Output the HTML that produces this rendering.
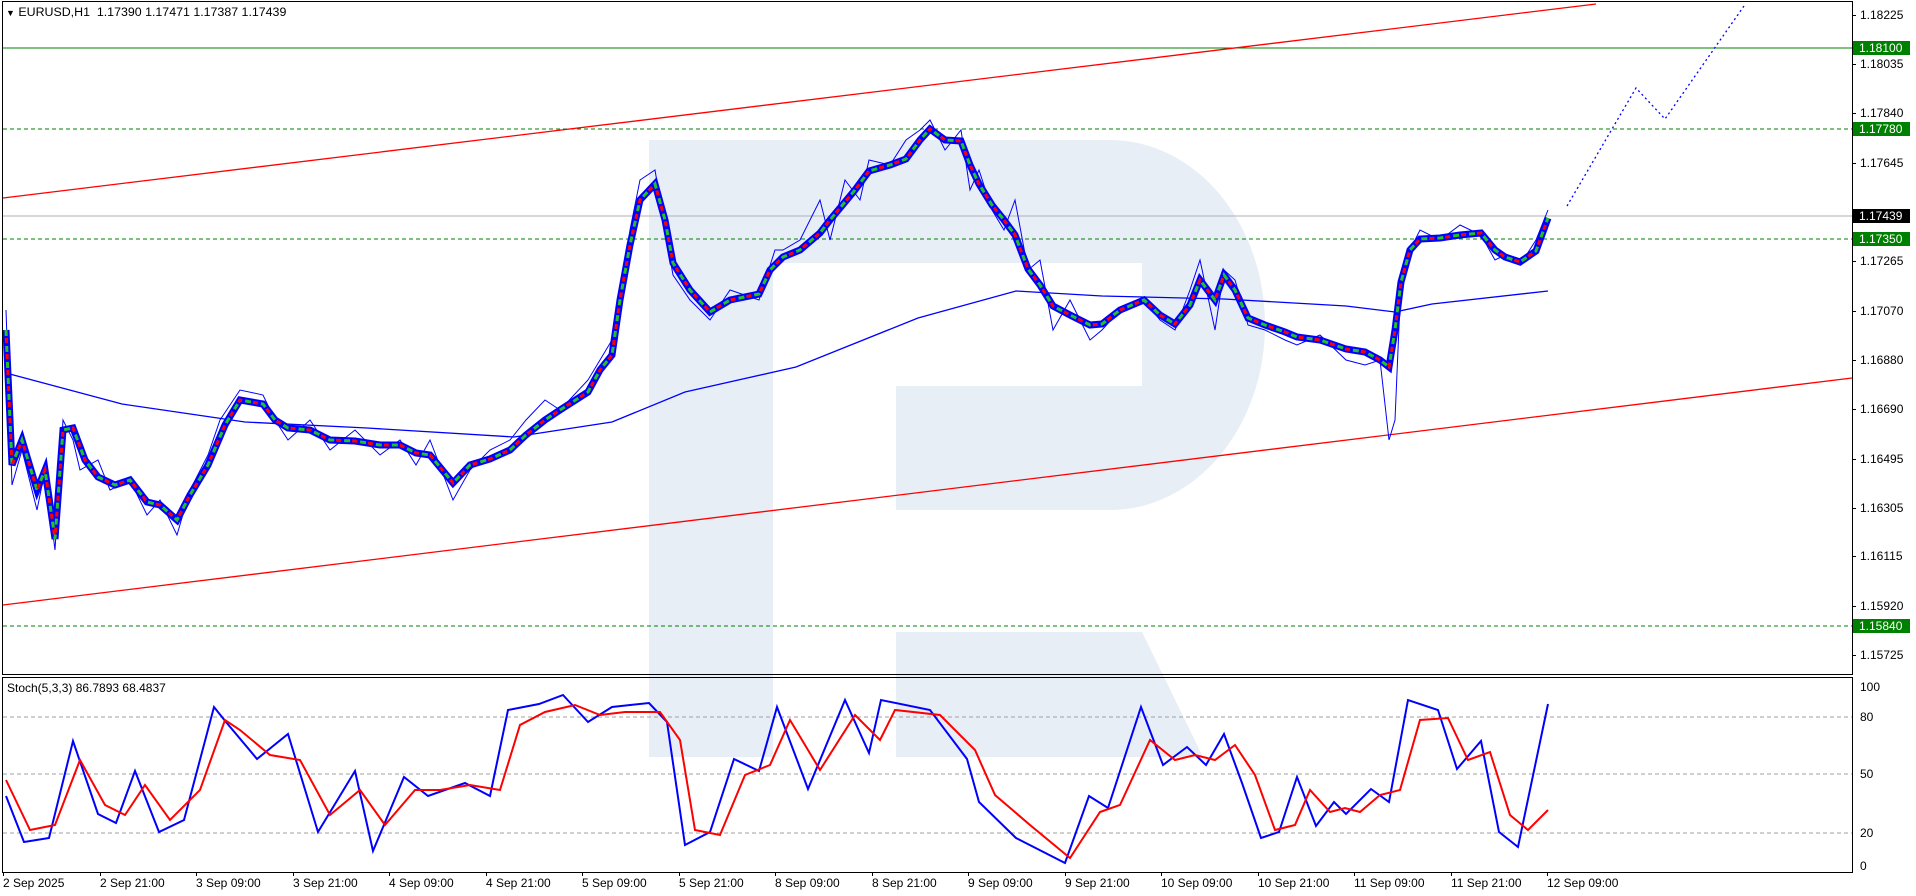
<!DOCTYPE html>
<html><head><meta charset="utf-8"><style>
html,body{margin:0;padding:0;background:#fff;width:1916px;height:896px;overflow:hidden;font-family:"Liberation Sans",sans-serif;}
.l{position:absolute;font-size:12px;color:#000;white-space:nowrap;line-height:14px}
.tag{position:absolute;left:1853px;width:57px;height:14px;font-size:12px;line-height:14px;color:#fff;padding-left:6px;box-sizing:border-box}
.tk{position:absolute;width:4px;height:1px;background:#000;left:1852px}
.vt{position:absolute;width:1px;height:4px;background:#000;top:872px}
</style></head><body>
<svg width="1916" height="896" style="position:absolute;left:0;top:0">
<g fill="#e8eef6">
<path d="M649 140 H1110 A155 185 0 0 1 1265 325 A155 185 0 0 1 1110 510 H896 V386 H1142 V263 H773 V757 H649 Z"/>
<path d="M896 632 H1142 L1203 757 H896 Z"/>
</g>
<g stroke-width="1" fill="none">
<line x1="3" y1="48" x2="1852" y2="48" stroke="#008000"/>
<line x1="3" y1="129" x2="1852" y2="129" stroke="#008000" stroke-dasharray="4,3"/>
<line x1="3" y1="239" x2="1852" y2="239" stroke="#008000" stroke-dasharray="4,3"/>
<line x1="3" y1="626" x2="1852" y2="626" stroke="#008000" stroke-dasharray="4,3"/>
<line x1="3" y1="216" x2="1852" y2="216" stroke="#b0b0b0"/>
<line x1="3" y1="198" x2="1596" y2="4" stroke="#ff0000" stroke-width="1.3"/>
<line x1="3" y1="605" x2="1852" y2="378" stroke="#ff0000" stroke-width="1.3"/>
<line x1="3" y1="717" x2="1852" y2="717" stroke="#a0a0a0" stroke-dasharray="4,3"/>
<line x1="3" y1="774" x2="1852" y2="774" stroke="#a0a0a0" stroke-dasharray="4,3"/>
<line x1="3" y1="833" x2="1852" y2="833" stroke="#a0a0a0" stroke-dasharray="4,3"/>
</g>
<polyline fill="none" stroke="#0000ff" stroke-width="1.3" points="6,373 122,404 245,422 367,428 514,437 612,422 685,392 796,367 918,318 1016,291 1102,296 1224,299 1346,306 1395,312 1432,304 1548,291"/>
<polyline fill="none" stroke="#0000ff" stroke-width="1" points="6,310 12,485 22,450 37,510 45,470 55,550 63,420 73,440 80,470 98,460 110,490 130,480 147,515 160,500 177,535 190,490 208,455 220,420 240,390 263,395 275,420 288,440 310,420 330,450 355,430 380,455 400,440 416,465 430,440 453,500 470,470 490,450 510,440 526,420 545,400 560,410 588,380 600,360 612,340 620,300 630,230 640,180 655,170 665,230 673,275 690,300 710,320 730,290 759,300 775,250 783,250 800,240 820,200 830,240 845,180 860,200 869,160 890,165 906,140 920,130 930,120 945,150 961,130 970,190 979,170 992,210 1004,230 1015,200 1028,270 1040,260 1053,330 1070,300 1090,340 1102,330 1120,310 1144,300 1160,320 1175,330 1190,290 1200,260 1215,330 1224,270 1235,280 1248,325 1265,330 1285,340 1297,345 1320,335 1346,360 1365,365 1380,360 1389,440 1395,420 1401,280 1410,250 1420,230 1440,240 1460,225 1481,235 1495,260 1505,255 1520,265 1536,240 1548,210"/>
<polyline fill="none" stroke="#0000ff" stroke-width="7" points="6,330 12,465 22,440 37,490 45,470 55,539 63,430 73,428 85,460 98,477 115,485 130,480 147,502 160,505 177,520 190,495 208,465 225,425 240,400 263,404 275,420 288,428 310,430 330,440 355,441 380,445 400,445 416,453 430,455 453,483 470,465 490,459 510,450 526,435 545,420 560,410 588,392 600,370 612,355 620,300 630,245 640,200 655,184 665,220 673,263 690,290 710,312 730,300 759,294 770,270 783,257 800,250 820,233 830,220 845,202 855,190 869,171 890,165 906,159 920,140 930,129 945,140 961,141 970,165 979,184 992,205 1004,220 1015,235 1028,269 1040,285 1053,306 1070,315 1090,325 1102,324 1120,310 1144,300 1160,315 1175,324 1190,305 1200,280 1215,300 1224,275 1235,290 1248,318 1265,325 1285,332 1297,337 1320,340 1346,349 1365,352 1380,360 1389,367 1395,330 1401,282 1410,250 1420,239 1440,238 1460,235 1481,233 1495,250 1505,257 1520,262 1536,251 1548,218"/>
<polyline fill="none" stroke="#22c322" stroke-width="3" stroke-dasharray="6,10" points="6,330 12,465 22,440 37,490 45,470 55,539 63,430 73,428 85,460 98,477 115,485 130,480 147,502 160,505 177,520 190,495 208,465 225,425 240,400 263,404 275,420 288,428 310,430 330,440 355,441 380,445 400,445 416,453 430,455 453,483 470,465 490,459 510,450 526,435 545,420 560,410 588,392 600,370 612,355 620,300 630,245 640,200 655,184 665,220 673,263 690,290 710,312 730,300 759,294 770,270 783,257 800,250 820,233 830,220 845,202 855,190 869,171 890,165 906,159 920,140 930,129 945,140 961,141 970,165 979,184 992,205 1004,220 1015,235 1028,269 1040,285 1053,306 1070,315 1090,325 1102,324 1120,310 1144,300 1160,315 1175,324 1190,305 1200,280 1215,300 1224,275 1235,290 1248,318 1265,325 1285,332 1297,337 1320,340 1346,349 1365,352 1380,360 1389,367 1395,330 1401,282 1410,250 1420,239 1440,238 1460,235 1481,233 1495,250 1505,257 1520,262 1536,251 1548,218"/>
<polyline fill="none" stroke="#ff0000" stroke-width="3" stroke-dasharray="5,11" stroke-dashoffset="8" points="6,330 12,465 22,440 37,490 45,470 55,539 63,430 73,428 85,460 98,477 115,485 130,480 147,502 160,505 177,520 190,495 208,465 225,425 240,400 263,404 275,420 288,428 310,430 330,440 355,441 380,445 400,445 416,453 430,455 453,483 470,465 490,459 510,450 526,435 545,420 560,410 588,392 600,370 612,355 620,300 630,245 640,200 655,184 665,220 673,263 690,290 710,312 730,300 759,294 770,270 783,257 800,250 820,233 830,220 845,202 855,190 869,171 890,165 906,159 920,140 930,129 945,140 961,141 970,165 979,184 992,205 1004,220 1015,235 1028,269 1040,285 1053,306 1070,315 1090,325 1102,324 1120,310 1144,300 1160,315 1175,324 1190,305 1200,280 1215,300 1224,275 1235,290 1248,318 1265,325 1285,332 1297,337 1320,340 1346,349 1365,352 1380,360 1389,367 1395,330 1401,282 1410,250 1420,239 1440,238 1460,235 1481,233 1495,250 1505,257 1520,262 1536,251 1548,218"/>
<polyline fill="none" stroke="#0000ff" stroke-width="1.3" stroke-dasharray="2,3" points="1567,206 1636,88 1665,119 1744,6"/>
<polyline fill="none" stroke="#0000ff" stroke-width="2" points="6,796 24,842 49,838 73,741 98,814 116,823 135,771 159,832 184,820 214,707 226,722 257,759 288,734 318,832 355,771 373,851 404,777 428,796 465,783 490,796 508,710 539,704 563,695 588,722 612,707 649,703 667,722 685,845 710,832 734,759 759,771 777,707 808,789 845,700 869,753 881,700 930,710 967,759 979,802 1016,838 1065,863 1089,796 1108,808 1141,707 1163,765 1187,747 1206,765 1224,734 1242,783 1261,838 1279,832 1297,777 1316,826 1334,802 1346,814 1371,789 1389,802 1408,700 1438,710 1457,769 1481,741 1499,832 1518,847 1548,704"/>
<polyline fill="none" stroke="#ff0000" stroke-width="2" points="6,780 30,830 55,825 80,760 105,805 125,815 145,785 170,820 200,790 225,720 240,730 270,755 300,760 330,815 360,790 385,825 415,790 440,790 470,785 500,790 520,725 545,712 575,705 600,715 625,712 660,712 680,740 695,830 720,835 745,775 770,765 790,720 820,770 855,715 880,740 895,710 940,715 975,750 995,795 1030,825 1070,858 1100,812 1120,805 1150,740 1175,760 1195,755 1215,760 1235,745 1255,775 1275,830 1295,825 1310,790 1330,812 1345,808 1360,812 1380,795 1400,790 1420,720 1448,718 1468,760 1490,752 1510,815 1528,830 1548,810"/>
<rect x="2.5" y="1.5" width="1850" height="673" fill="none" stroke="#000"/>
<rect x="2.5" y="677.5" width="1850" height="195" fill="none" stroke="#000"/>
</svg>
<div class="l" style="left:6px;top:5px;font-size:12.4px"><span style="font-size:9px">▼</span> EURUSD,H1&nbsp; 1.17390 1.17471 1.17387 1.17439</div>
<div class="l" style="left:7px;top:681px">Stoch(5,3,3) 86.7893 68.4837</div>
<div class="l" style="left:1860px;top:8px">1.18225</div><div class="tk" style="top:15px"></div>
<div class="l" style="left:1860px;top:57px">1.18035</div><div class="tk" style="top:64px"></div>
<div class="l" style="left:1860px;top:106px">1.17840</div><div class="tk" style="top:113px"></div>
<div class="l" style="left:1860px;top:156px">1.17645</div><div class="tk" style="top:163px"></div>
<div class="l" style="left:1860px;top:254px">1.17265</div><div class="tk" style="top:261px"></div>
<div class="l" style="left:1860px;top:304px">1.17070</div><div class="tk" style="top:311px"></div>
<div class="l" style="left:1860px;top:353px">1.16880</div><div class="tk" style="top:360px"></div>
<div class="l" style="left:1860px;top:402px">1.16690</div><div class="tk" style="top:409px"></div>
<div class="l" style="left:1860px;top:452px">1.16495</div><div class="tk" style="top:459px"></div>
<div class="l" style="left:1860px;top:501px">1.16305</div><div class="tk" style="top:508px"></div>
<div class="l" style="left:1860px;top:549px">1.16115</div><div class="tk" style="top:556px"></div>
<div class="l" style="left:1860px;top:599px">1.15920</div><div class="tk" style="top:606px"></div>
<div class="l" style="left:1860px;top:648px">1.15725</div><div class="tk" style="top:655px"></div>
<div class="tag" style="top:41px;background:#008000">1.18100</div>
<div class="tag" style="top:122px;background:#008000">1.17780</div>
<div class="tag" style="top:209px;background:#000">1.17439</div>
<div class="tag" style="top:232px;background:#008000">1.17350</div>
<div class="tag" style="top:619px;background:#008000">1.15840</div>
<div class="l" style="left:1860px;top:680px">100</div>
<div class="l" style="left:1860px;top:710px">80</div>
<div class="l" style="left:1860px;top:767px">50</div>
<div class="l" style="left:1860px;top:826px">20</div>
<div class="l" style="left:1860px;top:859px">0</div>
<div class="l" style="left:3px;top:876px">2 Sep 2025</div><div class="vt" style="left:3px"></div>
<div class="l" style="left:100px;top:876px">2 Sep 21:00</div><div class="vt" style="left:100px"></div>
<div class="l" style="left:196px;top:876px">3 Sep 09:00</div><div class="vt" style="left:196px"></div>
<div class="l" style="left:293px;top:876px">3 Sep 21:00</div><div class="vt" style="left:293px"></div>
<div class="l" style="left:389px;top:876px">4 Sep 09:00</div><div class="vt" style="left:389px"></div>
<div class="l" style="left:486px;top:876px">4 Sep 21:00</div><div class="vt" style="left:486px"></div>
<div class="l" style="left:582px;top:876px">5 Sep 09:00</div><div class="vt" style="left:582px"></div>
<div class="l" style="left:679px;top:876px">5 Sep 21:00</div><div class="vt" style="left:679px"></div>
<div class="l" style="left:775px;top:876px">8 Sep 09:00</div><div class="vt" style="left:775px"></div>
<div class="l" style="left:872px;top:876px">8 Sep 21:00</div><div class="vt" style="left:872px"></div>
<div class="l" style="left:968px;top:876px">9 Sep 09:00</div><div class="vt" style="left:968px"></div>
<div class="l" style="left:1065px;top:876px">9 Sep 21:00</div><div class="vt" style="left:1065px"></div>
<div class="l" style="left:1161px;top:876px">10 Sep 09:00</div><div class="vt" style="left:1161px"></div>
<div class="l" style="left:1258px;top:876px">10 Sep 21:00</div><div class="vt" style="left:1258px"></div>
<div class="l" style="left:1354px;top:876px">11 Sep 09:00</div><div class="vt" style="left:1354px"></div>
<div class="l" style="left:1451px;top:876px">11 Sep 21:00</div><div class="vt" style="left:1451px"></div>
<div class="l" style="left:1547px;top:876px">12 Sep 09:00</div><div class="vt" style="left:1547px"></div>
</body></html>
